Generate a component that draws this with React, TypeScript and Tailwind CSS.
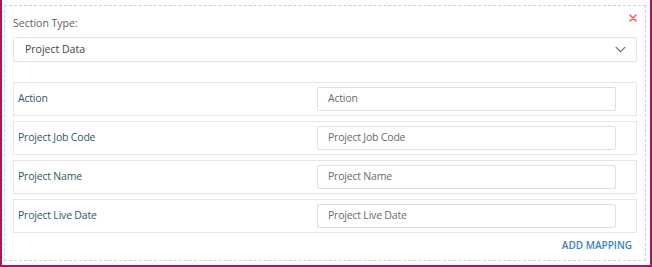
import React from 'react';

const rows = ['Action', 'Project Job Code', 'Project Name', 'Project Live Date'];

function CloseIcon() {
  return (
    <svg viewBox="0 0 8 8" className="w-[8px] h-[8px]" fill="none" stroke="#ea5a50" strokeWidth="1.5" strokeLinecap="round">
      <path d="M1 1l6 6M7 1L1 7" />
    </svg>
  );
}

function Chevron() {
  return (
    <svg viewBox="0 0 12 8" className="w-[11px] h-[7px]" fill="none" stroke="#5d6d82" strokeWidth="1.4" strokeLinecap="round" strokeLinejoin="round">
      <path d="M1 1.5l5 5 5-5" />
    </svg>
  );
}

export default function App() {
  return (
    <div
      className="w-[652px] h-[267px] bg-white border-l-2 border-r-2 border-b-2 border-[#a8175a] pt-[5px] pl-[2px] pr-[4px] pb-[4px] text-[10.5px]"
      style={{ fontFamily: '"Open Sans", "Noto Sans", Arial, sans-serif' }}
    >
      <div className="relative h-full border border-dashed border-[#cfcfcf] px-[8px] pt-[10px]">
        <button className="absolute right-[8px] top-[8px] p-0">
          <CloseIcon />
        </button>
        <div className="text-[#5e5e5e] leading-[14px]">Section Type:</div>
        <div className="mt-[7px] h-[25px] flex items-center justify-between border border-[#e3e3e3] rounded-[2px] pl-[11px] pr-[10px] text-[#444]">
          <span>Project Data</span>
          <Chevron />
        </div>
        <div className="mt-[20px] flex flex-col gap-[5px]">
          {rows.map((r) => (
            <div key={r} className="h-[34px] flex items-center border border-[#e6e6e6] pl-[4px] pr-[20px]">
              <span className="flex-1 text-[#2f5864] tracking-[-0.2px]">{r}</span>
              <div className="w-[299px] h-[24px] flex items-center border border-[#e0e0e0] rounded-[2px] px-[10px] text-[#6b6b6b] tracking-[-0.2px]">
                {r}
              </div>
            </div>
          ))}
        </div>
        <div className="flex justify-end pr-[5px] mt-[5px]">
          <span className="text-[10px] font-semibold text-[#3b80c2] leading-[14px]">ADD MAPPING</span>
        </div>
      </div>
    </div>
  );
}
